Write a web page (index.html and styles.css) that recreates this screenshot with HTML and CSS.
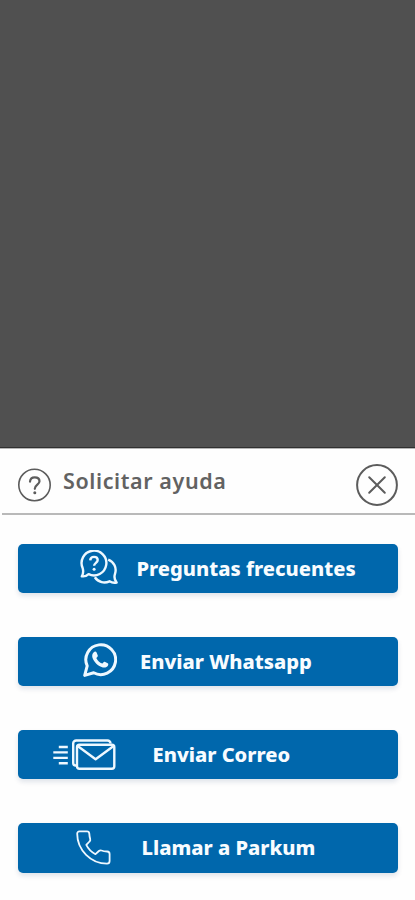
FILE: index.html
```html
<!DOCTYPE html>
<html lang="es">

  <head>
    <meta charset="utf-8">
    <meta name="viewport" content="width=device-width, initial-scale=1">
    <title>Solicitar ayuda</title>
    <link rel="stylesheet" href="styles.css">
  </head>

  <body>

  <div class="overlay"></div>

  <div class="panel">

    <div class="header">
      <svg class="help" width="34" height="34" viewBox="0 0 34 34">
        <circle cx="17.5" cy="17" r="15.7"/>
        <path class="mark" d="M13 13.6c.3-2.9 2.1-4.3 4.7-4.3 2.8 0 4.8 1.5 4.8 4 0 3.3-4.7 3.5-4.7 7.5"/>
        <circle class="dot" cx="17.8" cy="24.8" r="1.5"/>
      </svg>
      <h1>Solicitar ayuda</h1>
      <button class="close" aria-label="Cerrar">
        <svg width="42" height="42" viewBox="0 0 42 42">
          <circle cx="21" cy="21" r="19.9"/>
          <path d="M13.2 13.2l15.6 15.6M28.8 13.2L13.2 28.8"/>
        </svg>
      </button>
    </div>

    <div class="options">
      <button class="option faq">
        <svg width="38" height="35" viewBox="0 0 38 35">
          <path d="M1.8 26.3C3.2 24 3.6 21.5 2.7 18.2A12.4 12.4 0 1 1 8.6 24.2C6.6 26 4.2 26.7 1.8 26.3z"/>
          <path d="M28.2 9.6C34 11.600 37 18 35 23.8C34.100 26.5 34.600 30 36.600 32.5C34 33.2 31.600 32.6 29.5 31.3C24.5 33.7 18.5 32.5 14.8 27.300"/>
          <path d="M10.2 10.4c.2-2.3 1.7-3.5 3.8-3.5 2.2 0 3.7 1.3 3.7 3.2 0 2.7-3.6 2.9-3.6 5.7"/>
          <circle class="dot" cx="14.1" cy="19.2" r="1.5"/>
        </svg>
        <span>Preguntas frecuentes</span>
      </button>

      <button class="option whatsapp">
        <svg width="34" height="34" viewBox="0 0 34 34">
          <path d="M1.7 32.4L4.2 22.9A14.9 14.9 0 1 1 10.7 29.8z"/>
          <path class="solid" d="M10.8 9.2C11.7 8.3 13.1 8.4 13.6 9.6L14.8 12.6C15.1 13.4 13.7 14.6 13.4 15.2C14.7 17.7 16.6 19.5 19.2 20.6C20 20.2 20.8 18.5 21.7 18.8L24.7 20.3C25.7 20.9 25.3 22.4 24.5 23.3C23.4 24.5 21.6 24.9 19.8 24.4C14.9 23 10.9 19.1 9.4 14.4C8.9 12.4 9.4 10.5 10.8 9.2z"/>
        </svg>
        <span>Enviar Whatsapp</span>
      </button>

      <button class="option mail">
        <svg width="63" height="32" viewBox="0 0 63 32">
          <path d="M5.8 8H14.8M.3 13.4H14.8M.3 18.9H14.8M5.8 24.3H14.8"/>
          <path d="M23.5 26.5H22.7A2.5 2.5 0 0 1 20.2 24V4.5A3 3 0 0 1 23.2 1.5H54.5A3 3 0 0 1 57.5 4.5"/>
          <rect x="24" y="5.7" width="37.3" height="24" rx="2.5"/>
          <path d="M25 7.2L42.6 20.3L60.3 7.2"/>
        </svg>
        <span>Enviar Correo</span>
      </button>

      <button class="option phone">
        <svg width="35" height="35" viewBox="0 0 35 35">
          <path d="M3.5 1.3H11C12.4 1.3 13.2 2.3 13.3 3.6C13.4 5.5 13.7 7.2 14.2 8.9C14.5 10 14.2 10.8 13.5 11.5L10.3 14.9C12.2 18.8 15.4 22.1 19.5 24.2L22.9 21C23.6 20.4 24.5 20.2 25.4 20.5C27.1 21.1 29.3 21.4 31.2 21.5C32.7 21.6 33.6 22.5 33.6 23.9V31.1C33.6 32.7 32.6 33.7 31 33.7C15 33.7 1.2 20 1.2 3.8C1.2 2.3 2.1 1.3 3.5 1.3z"/>
        </svg>
        <span>Llamar a Parkum</span>
      </button>
    </div>

  </div>

  </body>

</html>
```
FILE: styles.css
```css
  body {
    margin: 0;
    height: 900px;
    overflow: hidden;
    font-family: "Noto Sans", "Open Sans", sans-serif;
    background-color: #fefefe;
  }

  .overlay {
    box-sizing: border-box;
    height: 448px;
    background-color: #505050;
    border-bottom: 1px solid #303030;
  }

  .panel {
    height: 451px;
    border-top: 1px solid #b5b5b5;
  }

  .header {
    display: flex;
    box-sizing: border-box;
    height: 66px;
    margin-left: 2px;
    padding: 14px 17px 0 15px;
    border-bottom: 2px solid #b9b9b9;
  }

  .header svg {
    fill: none;
    stroke: #5c5c5c;
    stroke-width: 1.6;
    stroke-linecap: round;
  }

  .header .help {
    margin-top: 5px;
  }

  .header .mark {
    stroke-width: 2.2;
  }

  .header .dot {
    fill: #5c5c5c;
    stroke: none;
  }

  h1 {
    margin: 3px 0 0 12px;
    color: #626262;
    font-size: 21.5px;
    font-weight: 600;
    letter-spacing: 0.6px;
    line-height: 30px;
    white-space: nowrap;
  }

  .close {
    height: 42px;
    margin: 1px 0 0 auto;
    padding: 0;
    border: none;
    background: none;
  }

  .close svg {
    display: block;
    stroke-width: 2;
  }

  .options {
    display: flex;
    flex-direction: column;
    gap: 43.7px;
    padding: 28.5px 17.5px 0 18px;
  }

  .option {
    display: flex;
    align-items: center;
    box-sizing: border-box;
    height: 49.5px;
    padding: 0;
    border: none;
    border-radius: 5px;
    color: #f8fcff;
    background-color: #0067ac;
    box-shadow: 0 3px 5px rgba(0, 40, 90, 0.12);
    font-family: inherit;
    font-size: 20.1px;
    font-weight: 800;
    white-space: nowrap;
  }

  .option svg {
    fill: none;
    stroke: #eef8ff;
    stroke-width: 2.4;
    stroke-linejoin: round;
  }

  .option .dot,
  .option .solid {
    fill: #eef8ff;
    stroke: none;
  }

  .faq {
    padding-left: 62px;
  }

  .faq svg {
    margin-bottom: 2px;
  }

  .faq span {
    margin-left: 18.5px;
  }

  .whatsapp {
    padding-left: 65px;
  }

  .whatsapp svg {
    margin-bottom: 2px;
    stroke-width: 3;
  }

  .whatsapp span {
    margin-left: 23px;
  }

  .mail {
    padding-left: 35px;
  }

  .mail span {
    margin-left: 36.5px;
  }

  .phone {
    padding-left: 58px;
  }

  .phone svg {
    stroke-width: 1.8;
  }

  .phone span {
    margin-left: 30.5px;
  }
```
